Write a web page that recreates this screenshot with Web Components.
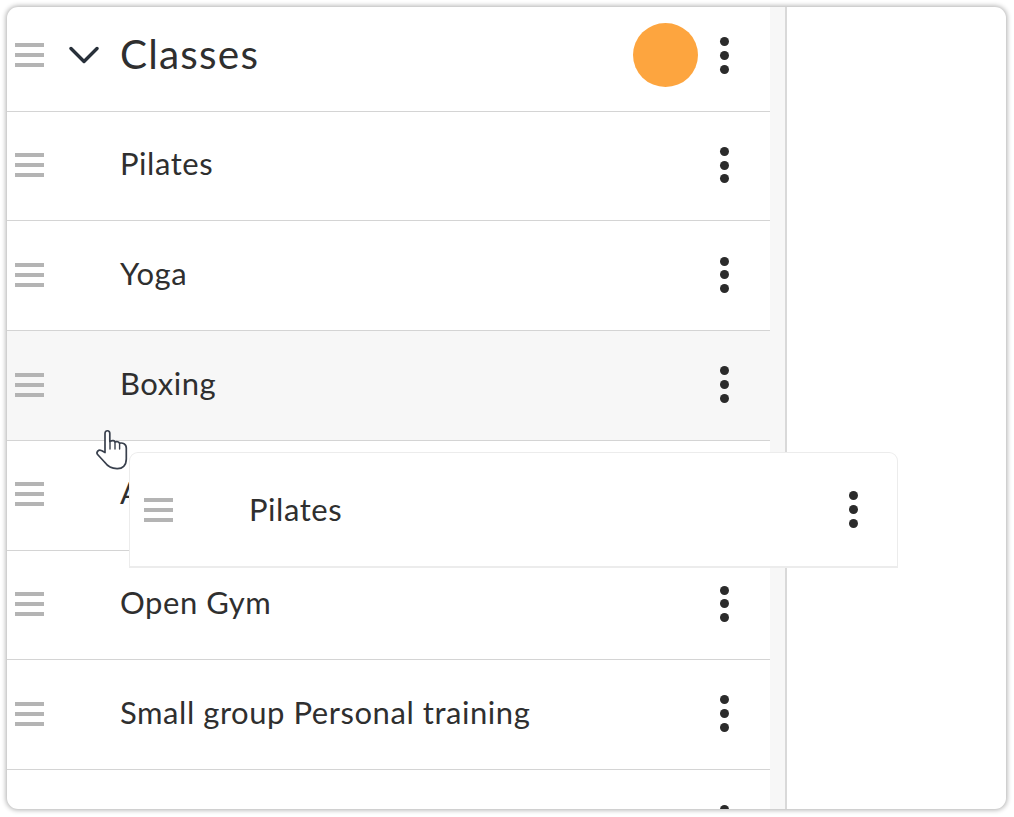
<!DOCTYPE html>
<html lang="en">
<head>
<meta charset="utf-8">
<title>Classes</title>
<style>
  html, body { margin: 0; background: #fff; height: 817px; overflow: hidden; }
  body { font-family: Lato, "Open Sans", sans-serif; color: #2f2f2f; }
</style>
</head>
<body>
<class-board>
  <class-row slot="list" heading expanded badge>Classes</class-row>
  <class-row slot="list">Pilates</class-row>
  <class-row slot="list">Yoga</class-row>
  <class-row slot="list" active>Boxing</class-row>
  <class-row slot="list">Aerial</class-row>
  <class-row slot="list">Open Gym</class-row>
  <class-row slot="list">Small group Personal training</class-row>
  <class-row slot="list"></class-row>
  <drag-card slot="overlay">Pilates</drag-card>
  <grab-cursor slot="overlay"></grab-cursor>
</class-board>

<script>
class DragHandle extends HTMLElement {
    constructor() {
        super();
        this.attachShadow({ mode: 'open' });
        this.shadowRoot.innerHTML = `
            <style>
                :host { display: flex; flex-direction: column; gap: 6px; width: 29px; flex: none; }
                i { display: block; height: 4px; background: #b4b4b4; }
            </style>
            <i></i><i></i><i></i>
        `;
    }
}
customElements.define('drag-handle', DragHandle);

class KebabMenu extends HTMLElement {
    constructor() {
        super();
        this.attachShadow({ mode: 'open' });
        this.shadowRoot.innerHTML = `
            <style>
                :host { display: flex; flex-direction: column; gap: 4.8px; width: 9px; flex: none; }
                i { display: block; width: 9px; height: 9px; border-radius: 50%; background: #2b2b2b; }
            </style>
            <i></i><i></i><i></i>
        `;
    }
}
customElements.define('kebab-menu', KebabMenu);

class ClassRow extends HTMLElement {
    constructor() {
        super();
        this.attachShadow({ mode: 'open' });
    }

    connectedCallback() {
        const heading = this.hasAttribute('heading');
        this.shadowRoot.innerHTML = `
            <style>
                :host {
                    display: flex;
                    align-items: center;
                    box-sizing: border-box;
                    height: 109.7px;
                    padding: 0 41px 2px 8px;
                    border-bottom: 1.5px solid #d4d4d4;
                    font-size: 31px;
                    letter-spacing: .55px;
                    color: #2f2f2f;
                }
                :host([heading]) { height: 104.8px; padding-bottom: 7px; font-size: 40.5px; letter-spacing: 1.2px; }
                :host([active]) { background: #f7f7f7; }
                .arrow { width: 76px; flex: none; display: flex; justify-content: flex-end; padding-right: 21px; box-sizing: border-box; }
                .arrow svg { display: block; }
                .title { flex: 1; white-space: nowrap; margin-bottom: 4px; }
                .badge { width: 65px; height: 64px; border-radius: 50%; background: #fda53f; margin-right: 22px; }
            </style>
            <drag-handle></drag-handle>
            <div class="arrow">${heading ? `
                <svg width="30" height="18" viewBox="0 0 30 18" fill="none" stroke="#28303a" stroke-width="3.4" stroke-linecap="round" stroke-linejoin="round">
                    <path d="M2 2.5 15 15.5 28 2.5"/>
                </svg>` : ''}
            </div>
            <div class="title"><slot></slot></div>
            ${this.hasAttribute('badge') ? '<div class="badge"></div>' : ''}
            <kebab-menu></kebab-menu>
        `;
    }
}
customElements.define('class-row', ClassRow);

class DragCard extends HTMLElement {
    constructor() {
        super();
        this.attachShadow({ mode: 'open' });
        this.shadowRoot.innerHTML = `
            <style>
                :host {
                    position: absolute;
                    left: 122px;
                    top: 445px;
                    box-sizing: border-box;
                    width: 769px;
                    height: 116px;
                    display: flex;
                    align-items: center;
                    padding: 0 39px 0 14px;
                    background: #fff;
                    border: 1px solid #ececec;
                    border-bottom-width: 2px;
                    border-radius: 9px 9px 0 0;
                    font-size: 31px;
                    letter-spacing: .55px;
                    color: #2f2f2f;
                }
                .title { flex: 1; margin: 0 0 2px 76px; white-space: nowrap; }
            </style>
            <drag-handle></drag-handle>
            <div class="title"><slot></slot></div>
            <kebab-menu></kebab-menu>
        `;
    }
}
customElements.define('drag-card', DragCard);

class GrabCursor extends HTMLElement {
    constructor() {
        super();
        this.attachShadow({ mode: 'open' });
        this.shadowRoot.innerHTML = `
            <style>
                :host { position: absolute; left: 88px; top: 422px; width: 34px; height: 42px; display: block; }
                svg { display: block; }
            </style>
            <svg width="34" height="42" viewBox="0 0 34 42" fill="#fff" stroke="#39404d" stroke-width="1.7" stroke-linecap="round" stroke-linejoin="round">
                <path d="M10 23.5V4.5C10 0.8 14.8 0.8 14.8 4.5V12.5C17.5 11 19.5 11.5 20 13C22 12 24 12.8 24.5 14.2C27.5 13.5 31.3 14.5 31.3 19V30C31.3 36.5 27.5 39.8 22 39.6C16 39.6 13 37.8 9.5 33L2.6 25.5C0.8 23.5 3.5 19.8 6.4 21.6Z"/>
                <path d="M15 13V20M20 13.4V20M24.6 14.5V20" fill="none" stroke-width="1.4"/>
            </svg>
        `;
    }
}
customElements.define('grab-cursor', GrabCursor);

class ClassBoard extends HTMLElement {
    constructor() {
        super();
        this.attachShadow({ mode: 'open' });
        this.shadowRoot.innerHTML = `
            <style>
                :host { display: block; padding: 7px 8px 8px 7px; }
                .window {
                    position: relative;
                    height: 802px;
                    display: flex;
                    overflow: hidden;
                    background: #fff;
                    border-radius: 11px;
                    box-shadow: 0 0 5px 1px rgba(0, 0, 0, .32);
                }
                .list { width: 763px; flex: none; }
                .strip { width: 15px; flex: none; background: #f7f7f7; border-right: 2px solid #d9d9d9; }
                .side { flex: 1; }
            </style>
            <div class="window">
                <div class="list"><slot name="list"></slot></div>
                <div class="strip"></div>
                <div class="side"></div>
                <slot name="overlay"></slot>
            </div>
        `;
    }
}
customElements.define('class-board', ClassBoard);
</script>
</body>
</html>
